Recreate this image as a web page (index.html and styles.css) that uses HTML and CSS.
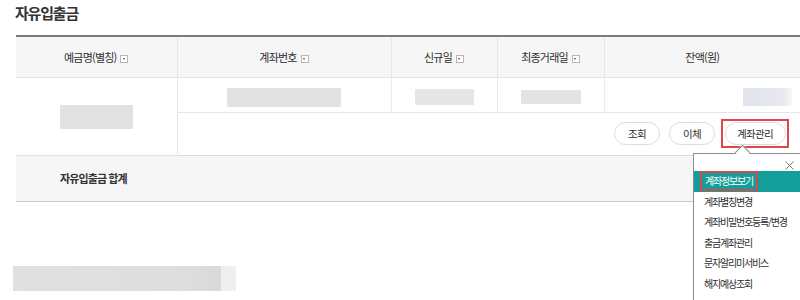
FILE: index.html
```html
<!DOCTYPE html>
<html lang="ko">
<head>
<meta charset="utf-8">
<title>자유입출금</title>
<link rel="stylesheet" href="styles.css">
</head>
<body>
<div class="page">
  <h2 class="title">자유입출금</h2>
  <div class="table-wrap">
    <table class="grid">
      <colgroup>
        <col class="c1"><col class="c2"><col class="c3"><col class="c4"><col class="c5">
      </colgroup>
      <thead>
        <tr>
          <th>예금명(별칭)<span class="sort"></span></th>
          <th>계좌번호<span class="sort"></span></th>
          <th>신규일<span class="sort"></span></th>
          <th>최종거래일<span class="sort"></span></th>
          <th>잔액(원)</th>
        </tr>
      </thead>
      <tbody>
        <tr class="row-data">
          <td rowspan="2" class="name-cell"><span class="blur b-name"></span></td>
          <td><span class="blur b-acct"></span></td>
          <td><span class="blur b-date1"></span></td>
          <td><span class="blur b-date2"></span></td>
          <td class="amt"><span class="blur b-amt"></span></td>
        </tr>
        <tr class="row-btns">
          <td colspan="4" class="btn-cell">
            <div class="btns">
              <button class="pill">조회</button>
              <button class="pill">이체</button>
              <span class="mark"><button class="pill pill-wide">계좌관리</button></span>
            </div>
          </td>
        </tr>
        <tr class="row-total">
          <td colspan="5">자유입출금 합계</td>
        </tr>
      </tbody>
    </table>
    <div class="menu">
      <span class="close">
        <svg width="9" height="9" viewBox="0 0 9 9"><path d="M0.5 0.5L8.5 8.5M8.5 0.5L0.5 8.5" stroke="#777" stroke-width="1" fill="none"/></svg>
      </span>
      <ul class="menu-list">
        <li class="active"><span class="mark-in">계좌정보보기</span></li>
        <li>계좌별칭변경</li>
        <li>계좌비밀번호등록/변경</li>
        <li>출금계좌관리</li>
        <li>문자알리미서비스</li>
        <li>해지예상조회</li>
      </ul>
    </div>
  </div>
  <div class="foot-blur"><span class="fb-main"></span><span class="fb-tail"></span></div>
</div>
</body>
</html>
```

FILE: styles.css
```css
* { box-sizing: border-box; }
html, body { margin: 0; padding: 0; background: #fff; }
body {
  font-family: "Noto Sans CJK KR", "Noto Sans", sans-serif;
  color: #333;
  width: 800px;
  height: 300px;
  overflow: hidden;
}
.page { padding: 0 0 0 16px; }
.title {
  margin: 0 0 0 -1px;
  height: 35px;
  padding-top: 3px;
  font-size: 15px;
  line-height: 20px;
  font-weight: 700;
  letter-spacing: -1.2px;
  color: #333;
}
.table-wrap { position: relative; width: 784px; }
.grid {
  width: 784px;
  table-layout: fixed;
  border-collapse: collapse;
  border-top: 2px solid #7b7b7b;
}
.c1 { width: 161px; }
.c2 { width: 214px; }
.c3 { width: 106px; }
.c4 { width: 107px; }
.c5 { width: 196px; }
.grid th {
  height: 41px;
  padding: 0;
  background: #f6f6f6;
  font-size: 11px;
  font-weight: 400;
  letter-spacing: -0.8px;
  color: #2e2e2e;
  border-bottom: 1px solid #e3e3e3;
  border-left: 1px solid #e6e6e6;
  vertical-align: middle;
}
.grid th:first-child { border-left: 0; }
.sort {
  display: inline-block;
  width: 8px;
  height: 8px;
  margin-left: 4px;
  border: 1px solid #b8b8b8;
  background: #fff;
  vertical-align: -1px;
  position: relative;
}
.sort::after {
  content: "";
  position: absolute;
  left: 1.5px;
  top: 2.5px;
  border-left: 1.5px solid transparent;
  border-right: 1.5px solid transparent;
  border-top: 2px solid #444;
}
.grid td { padding: 0; }
.row-data td {
  height: 35px;
  text-align: center;
  border-bottom: 1px solid #e6e6e6;
  border-left: 1px solid #ececec;
  vertical-align: middle;
}
.row-data td.name-cell {
  border-left: 0;
  border-right: 1px solid #e3e3e3;
  border-bottom: 1px solid #e3e3e3;
}
.row-data td.amt { text-align: right; padding-right: 8px; }
.blur {
  display: inline-block;
  vertical-align: middle;
  background: #e4e4e4;
  border-radius: 1px;
}
.b-name { width: 73px; height: 24px; background: #e2e2e2; }
.b-acct { width: 114px; height: 19px; background: #e2e2e2; }
.b-date1 { width: 59px; height: 16px; background: #e6e6e6; }
.b-date2 { width: 60px; height: 14px; background: #e3e3e3; }
.b-amt { width: 49px; height: 18px; background: linear-gradient(90deg, #e2e5ec, #e6e8ee 80%, #f6f6f8); }
.row-btns td { height: 43px; border-bottom: 1px solid #dcdcdc; }
.btns {
  display: flex;
  justify-content: flex-end;
  align-items: center;
  gap: 9px;
  padding-right: 11px;
}
.pill {
  font-family: inherit;
  height: 23px;
  width: 46px;
  padding: 0;
  border: 1px solid #dcdcdc;
  border-radius: 12px;
  background: #fff;
  font-size: 10.5px;
  letter-spacing: -0.6px;
  color: #2e2e2e;
}
.pill-wide { width: 61px; }
.mark {
  display: inline-flex;
  margin-left: -3px;
  padding: 1px 1.5px;
  border: 2px solid #e0464c;
}
.row-total td {
  height: 46px;
  background: #f6f6f6;
  padding-left: 44px;
  font-size: 11px;
  font-weight: 700;
  letter-spacing: -0.9px;
  color: #333;
  border-bottom: 1px solid #c9c9c9;
}
.menu {
  position: absolute;
  left: 677px;
  top: 118px;
  width: 120px;
  height: 150px;
  background: #fff;
  border: 1px solid #8c8c8c;
}
.menu::before {
  content: "";
  position: absolute;
  left: 43px;
  top: -7px;
  width: 10px;
  height: 10px;
  background: #fff;
  border-left: 1px solid #8c8c8c;
  border-top: 1px solid #8c8c8c;
  transform: rotate(45deg);
}
.close {
  position: absolute;
  left: 91px;
  top: 7px;
  width: 9px;
  height: 9px;
  display: block;
  line-height: 0;
}
.menu-list {
  list-style: none;
  margin: 17px 0 0 0;
  padding: 0;
}
.menu-list li {
  height: 20.6px;
  line-height: 20.6px;
  padding-left: 10px;
  font-size: 10px;
  letter-spacing: -1.2px;
  color: #2e2e2e;
  white-space: nowrap;
}
.menu-list li.active {
  background: #139e99;
  color: #fff;
  padding-left: 6px;
}
.mark-in {
  display: inline-block;
  height: 20px;
  line-height: 16px;
  padding: 0 3px;
  border: 2px solid #d24a4e;
  vertical-align: top;
}
.foot-blur {
  display: flex;
  margin: 64px 0 0 -3px;
}
.fb-main { width: 208px; height: 25px; background: linear-gradient(90deg, #e0e0e0, #dedede 80%, #d9d9d9); }
.fb-tail { width: 15px; height: 25px; background: #efefef; }
```
